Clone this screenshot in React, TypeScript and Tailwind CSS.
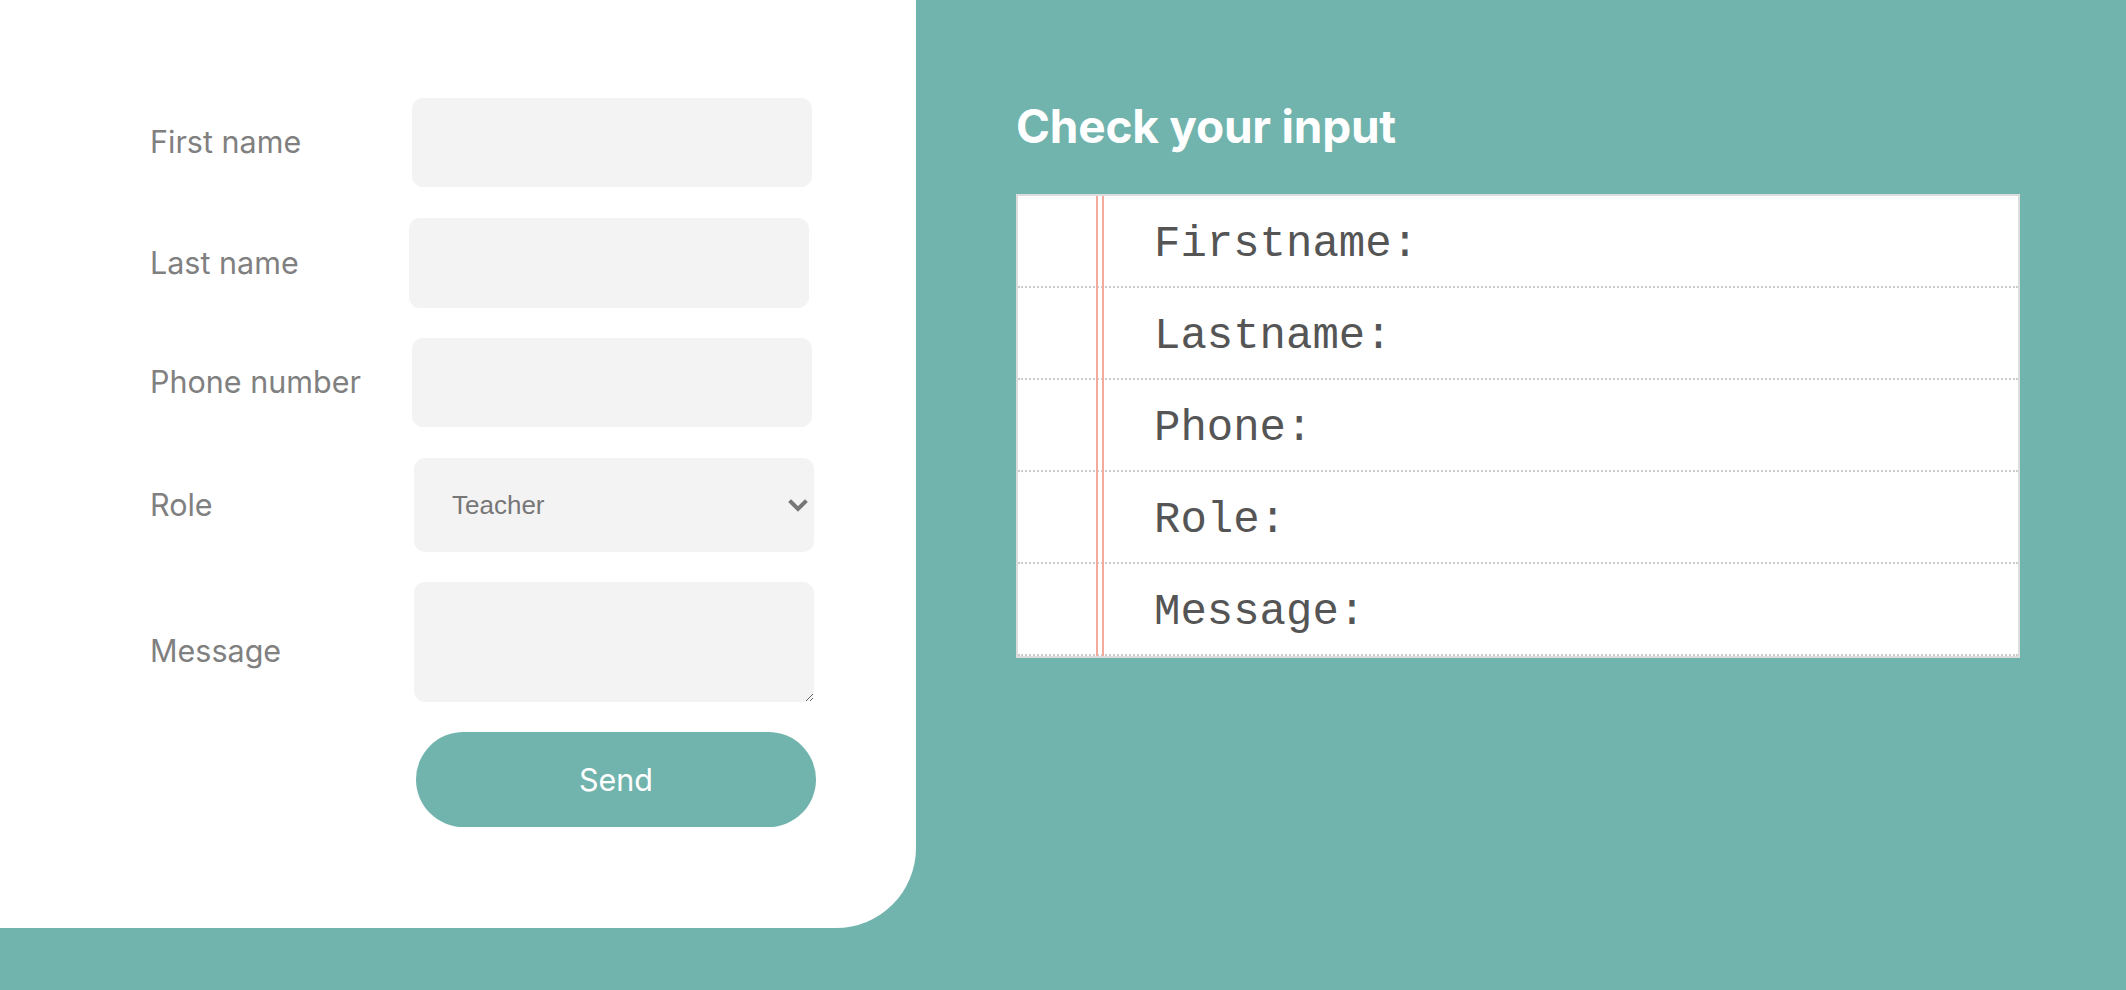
import React from "react";

const labelCls =
  "w-[262px] shrink-0 text-[30.5px] leading-none text-[#808080] font-['Inter',sans-serif]";
const fieldCls = "w-[400px] bg-[#f3f3f3] rounded-[11px] border-0 outline-none";

export default function App() {
  const rows = ["Firstname:", "Lastname:", "Phone:", "Role:", "Message:"];
  return (
    <div className="min-h-[990px] w-full bg-[#71b3ad] flex items-start">
      <div className="w-[916px] h-[928px] shrink-0 bg-white rounded-br-[80px] pl-[150px] pt-[98px] flex flex-col">
        <div className="flex items-center">
          <label className={labelCls}>First name</label>
          <input className={`${fieldCls} h-[89px]`} />
        </div>
        <div className="flex items-center mt-[31px]">
          <label className={labelCls}>Last name</label>
          <input className={`${fieldCls} h-[90px] -ml-[3px]`} />
        </div>
        <div className="flex items-center mt-[30px]">
          <label className={labelCls}>Phone number</label>
          <input className={`${fieldCls} h-[89px]`} />
        </div>
        <div className="flex items-center mt-[31px]">
          <label className={labelCls}>Role</label>
          <div className="relative ml-[2px]">
            <select
              defaultValue="Teacher"
              className={`${fieldCls} h-[94px] appearance-none pl-[38px] text-[26px] text-[#777] font-['Liberation_Sans',Arial,sans-serif]`}
            >
              <option>Teacher</option>
              <option>Student</option>
              <option>Parent</option>
            </select>
            <svg
              className="absolute left-[374px] top-[41px] pointer-events-none"
              width="20"
              height="13"
              viewBox="0 0 20 13"
            >
              <polyline
                points="3,3 10,10 17,3"
                fill="none"
                stroke="#777"
                strokeWidth="4"
                strokeLinecap="square"
              />
            </svg>
          </div>
        </div>
        <div className="flex items-center mt-[30px]">
          <label className={`${labelCls} pt-[18px]`}>Message</label>
          <textarea className={`${fieldCls} h-[120px] ml-[2px] block`} />
        </div>
        <div className="flex mt-[30px]">
          <div className="w-[266px] shrink-0" />
          <button className="w-[400px] h-[95px] rounded-full bg-[#71b3ad] text-white text-[30.5px] font-['Inter',sans-serif]">
            Send
          </button>
        </div>
      </div>

      <div className="pl-[100px] pt-[103px] flex flex-col">
        <h1 className="text-[46px] leading-none font-bold tracking-[-0.005em] text-white font-['Inter',sans-serif]">
          Check your input
        </h1>
        <div className="relative mt-[45px] w-[1004px] border-2 border-[#dddddd] bg-white">
          {rows.map((r) => (
            <div
              key={r}
              className="h-[92px] border-b-2 border-dotted border-[#cccccc] flex items-center pl-[136px] pt-[6px]"
            >
              <span className="text-[44px] leading-none text-[#555555] font-['Liberation_Mono','Courier_New',monospace]">
                {r}
              </span>
            </div>
          ))}
          <div className="absolute top-0 bottom-0 left-[78px] w-[2px] bg-[#f4aa9c]" />
          <div className="absolute top-0 bottom-0 left-[84px] w-[2px] bg-[#f4aa9c]" />
        </div>
      </div>
    </div>
  );
}
